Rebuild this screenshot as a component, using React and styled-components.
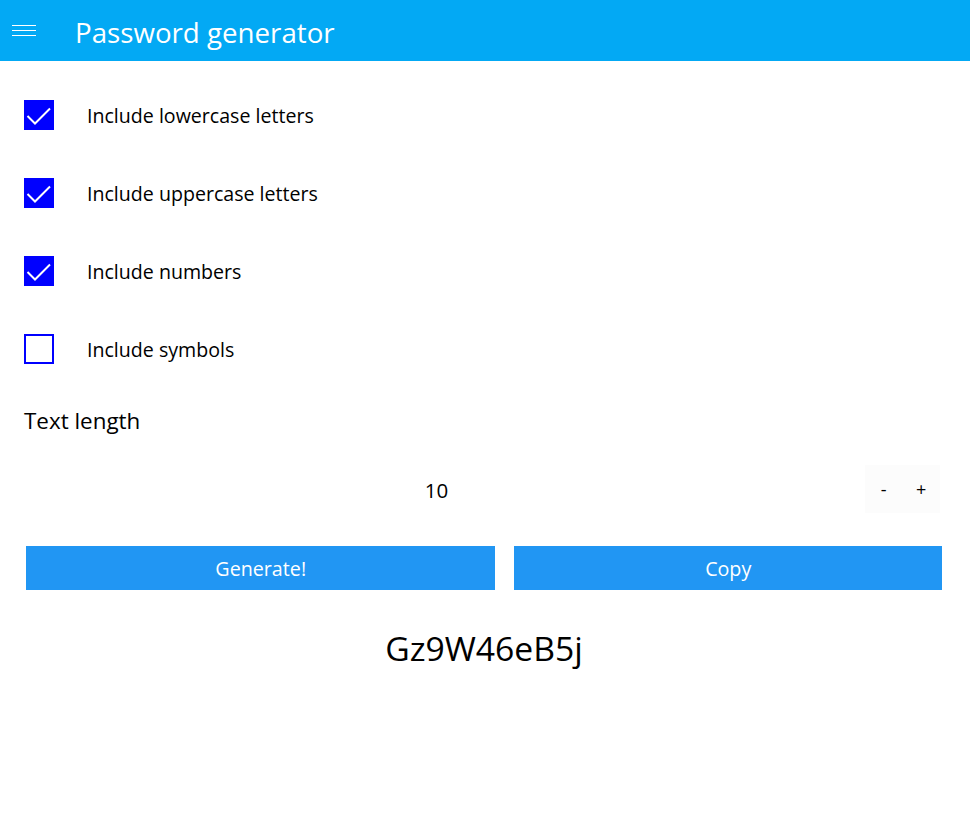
import React, { useState } from 'react'
import styled, { createGlobalStyle } from 'styled-components'

const Global = createGlobalStyle`
    body {
        margin: 0;
        background: #fff;
        font-family: "Open Sans", "Noto Sans", sans-serif;
        color: #000;
    }
`

const options = [
    { label: 'Include lowercase letters', on: true },
    { label: 'Include uppercase letters', on: true },
    { label: 'Include numbers', on: true },
    { label: 'Include symbols', on: false },
]

const App = () => {
    const [opts, setOpts] = useState(options)
    const [length, setLength] = useState(10)

    const toggle = (i) => setOpts(opts.map((o, j) => (j === i ? { ...o, on: !o.on } : o)))

    return (
        <Page>
            <Global />
            <Header>
                <Burger>
                    <span />
                    <span />
                    <span />
                </Burger>
                <Title>Password generator</Title>
            </Header>

            <Options>
                {opts.map((o, i) => (
                    <OptionRow key={o.label} onClick={() => toggle(i)}>
                        <Box checked={o.on}>
                            {o.on && (
                                <svg width="30" height="30" viewBox="0 0 30 30">
                                    <path d="M3.5 16 L11 23.5 L26 8.5" fill="none" stroke="#fff" strokeWidth="2" />
                                </svg>
                            )}
                        </Box>
                        <OptionLabel>{o.label}</OptionLabel>
                    </OptionRow>
                ))}
            </Options>

            <SectionLabel>Text length</SectionLabel>

            <LengthRow>
                <LengthValue>{length}</LengthValue>
                <Stepper>
                    <StepButton onClick={() => setLength(Math.max(1, length - 1))}>-</StepButton>
                    <StepButton onClick={() => setLength(length + 1)}>+</StepButton>
                </Stepper>
            </LengthRow>

            <Actions>
                <ActionButton grow={470}>Generate!</ActionButton>
                <ActionButton grow={427}>Copy</ActionButton>
            </Actions>

            <Result>Gz9W46eB5j</Result>
        </Page>
    )
}

export default App

const Page = styled.div`
    width: 970px;
    min-height: 820px;
`

const Header = styled.header`
    height: 61px;
    background: #03A9F4;
    display: flex;
    align-items: center;
`

const Burger = styled.div`
    width: 24px;
    margin-left: 12px;
    display: flex;
    flex-direction: column;
    gap: 4px;
    margin-top: -1px;

    span {
        display: block;
        height: 1px;
        background: #fff;
    }
`

const Title = styled.h1`
    margin: 2px 0 0 39px;
    font-size: 27.7px;
    font-weight: 400;
    color: #fff;
`

const Options = styled.div`
    display: flex;
    flex-direction: column;
    gap: 48px;
    padding: 39px 0 0 24px;
`

const OptionRow = styled.label`
    display: flex;
    align-items: center;
    height: 30px;
    cursor: pointer;
`

const Box = styled.span`
    width: 30px;
    height: 30px;
    box-sizing: border-box;
    flex-shrink: 0;
    background: ${p => (p.checked ? '#0000FF' : '#fff')};
    border: ${p => (p.checked ? 'none' : '2px solid #0000FF')};

    svg {
        display: block;
    }
`

const OptionLabel = styled.span`
    margin-left: 33px;
    font-size: 19.6px;
`

const SectionLabel = styled.div`
    margin: 42px 0 0 24px;
    font-size: 22.4px;
    line-height: 30px;
`

const LengthRow = styled.div`
    display: flex;
    align-items: center;
    margin: 29px 30px 0 8px;
`

const LengthValue = styled.div`
    flex: 1;
    text-align: center;
    font-size: 20.5px;
    padding-top: 2px;
`

const Stepper = styled.div`
    display: flex;
    background: #FCFCFC;
`

const StepButton = styled.button`
    width: 37.5px;
    height: 48px;
    border: none;
    background: transparent;
    font-family: inherit;
    font-size: 18px;
    color: #000;
    padding: 0;
    cursor: pointer;
`

const Actions = styled.div`
    display: flex;
    gap: 19px;
    margin: 33px 28px 0 26px;
`

const ActionButton = styled.button`
    flex: ${p => p.grow} 1 0;
    height: 44px;
    border: none;
    background: #2196F3;
    color: #fff;
    font-family: inherit;
    font-size: 19.7px;
    cursor: pointer;
`

const Result = styled.div`
    margin: 34px 28px 0 26px;
    text-align: center;
    font-size: 33.7px;
    line-height: 48px;
`
